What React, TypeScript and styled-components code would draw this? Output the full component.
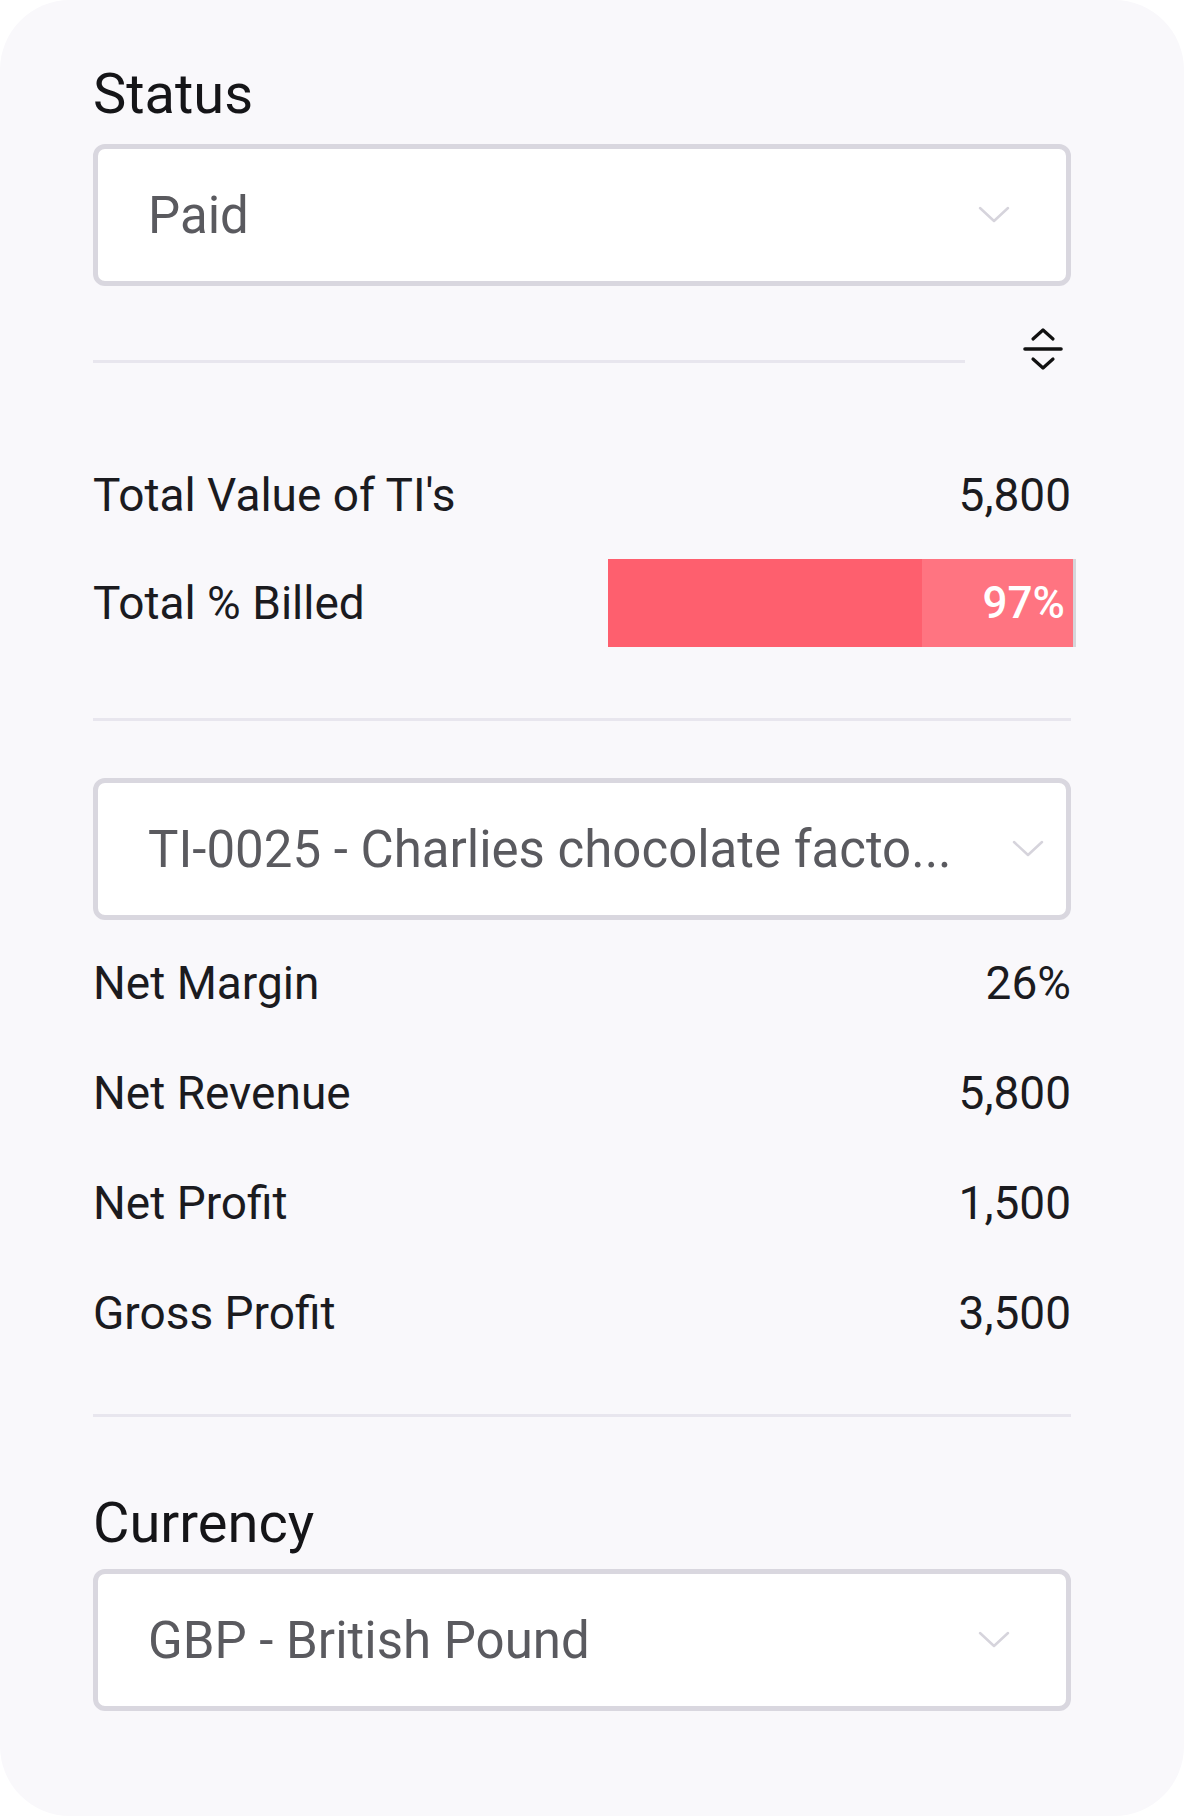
import React from "react";
import styled, { createGlobalStyle } from "styled-components";

const GlobalStyle = createGlobalStyle`
  html, body {
    margin: 0;
    padding: 0;
    background: #ffffff;
  }
  body {
    font-family: Roboto, "Liberation Sans", Arial, sans-serif;
    -webkit-font-smoothing: antialiased;
  }
`;

interface IStat {
  label: string;
  value: string;
}

const tiStats: IStat[] = [
  { label: "Net Margin", value: "26%" },
  { label: "Net Revenue", value: "5,800" },
  { label: "Net Profit", value: "1,500" },
  { label: "Gross Profit", value: "3,500" },
];

const Chevron: React.FC = () => (
  <svg width="32" height="18" viewBox="0 0 32 18" fill="none">
    <path d="M2 2 L16 15 L30 2" stroke="#d6d4dc" strokeWidth="2.5" strokeLinecap="round" strokeLinejoin="round" />
  </svg>
);

const ExpandIcon: React.FC = () => (
  <svg width="40" height="44" viewBox="0 0 40 44" fill="none">
    <path d="M10 12 L20 3 L30 12" stroke="#111" strokeWidth="3.2" strokeLinecap="round" strokeLinejoin="round" />
    <path d="M2 22 H38" stroke="#111" strokeWidth="3.6" strokeLinecap="round" />
    <path d="M10 32 L20 41 L30 32" stroke="#111" strokeWidth="3.2" strokeLinecap="round" strokeLinejoin="round" />
  </svg>
);

interface ISelectProps {
  value: string;
  chevronRight?: number;
}
const Select: React.FC<ISelectProps> = ({ value, chevronRight }) => (
  <SelectBox>
    <SelectValue>{value}</SelectValue>
    <ChevronWrap right={chevronRight}>
      <Chevron />
    </ChevronWrap>
  </SelectBox>
);

const App: React.FC = () => {
  return (
    <>
      <GlobalStyle />
      <Card>
        <FieldLabel>Status</FieldLabel>
        <Select value="Paid" chevronRight={56} />

        <ToolRow>
          <ToolDivider />
          <IconButton>
            <ExpandIcon />
          </IconButton>
        </ToolRow>

        <StatList>
          <StatRow>
            <StatLabel>Total Value of TI's</StatLabel>
            <StatValue>5,800</StatValue>
          </StatRow>
          <StatRow>
            <StatLabel>Total % Billed</StatLabel>
            <BilledBar>
              <BarFill style={{ width: "67.5%" }} />
              <BarRest>
                <BarText>97%</BarText>
              </BarRest>
            </BilledBar>
          </StatRow>
        </StatList>

        <Divider />

        <SelectGap>
          <Select value="TI-0025 - Charlies chocolate facto..." chevronRight={22} />
        </SelectGap>

        <TiStatList>
          {tiStats.map(s => (
            <StatRow key={s.label}>
              <StatLabel>{s.label}</StatLabel>
              <StatValue>{s.value}</StatValue>
            </StatRow>
          ))}
        </TiStatList>

        <Divider />

        <CurrencyLabel>Currency</CurrencyLabel>
        <Select value="GBP - British Pound" chevronRight={56} />
      </Card>
    </>
  );
};

const Card = styled.div`
  box-sizing: border-box;
  width: 1184px;
  height: 1816px;
  background: #f9f8fb;
  border-radius: 70px;
  padding: 62px 113px 0 93px;
  display: flex;
  flex-direction: column;
  color: #1b1b1f;
`;

const FieldLabel = styled.div`
  font-size: 56px;
  line-height: 64px;
  font-weight: 400;
  color: #151518;
  margin-bottom: 18px;
`;

const CurrencyLabel = styled(FieldLabel)`
  margin-top: 74px;
  margin-bottom: 14px;
`;

const SelectBox = styled.div`
  box-sizing: border-box;
  position: relative;
  height: 142px;
  border: 5px solid #d9d7df;
  border-radius: 12px;
  background: #ffffff;
  display: flex;
  align-items: center;
  padding: 0 110px 0 50px;
`;

const SelectValue = styled.div`
  font-size: 51px;
  color: #5a5a5f;
  white-space: nowrap;
  overflow: hidden;
`;

const ChevronWrap = styled.div<{ right?: number }>`
  position: absolute;
  top: 50%;
  right: ${p => p.right ?? 56}px;
  transform: translateY(-50%);
  display: flex;
`;

const ToolRow = styled.div`
  display: flex;
  align-items: center;
  margin-top: 41px;
  padding-right: 8px;
  gap: 58px;
  height: 44px;
`;

const Divider = styled.div`
  height: 3px;
  flex: none;
  background: #e8e6ee;
`;

const ToolDivider = styled(Divider)`
  flex: 1;
  margin-top: 24px;
`;

const IconButton = styled.div`
  width: 40px;
  height: 44px;
  display: flex;
  align-items: center;
  justify-content: center;
`;

const StatList = styled.div`
  display: flex;
  flex-direction: column;
  gap: 18px;
  margin-top: 79px;
  margin-bottom: 70px;
`;

const StatRow = styled.div`
  display: flex;
  align-items: center;
  justify-content: space-between;
  height: 90px;
`;

const StatLabel = styled.div`
  font-size: 46px;
  color: #1b1b1f;
`;

const StatValue = styled.div`
  font-size: 46px;
  color: #1b1b1f;
`;

const BilledBar = styled.div`
  width: 468px;
  height: 88px;
  margin-right: -5px;
  display: flex;
  background: #fe6472;
  border-right: 3px solid #d6d6da;
  box-sizing: border-box;
`;

const BarFill = styled.div`
  background: #fe5f6e;
`;

const BarRest = styled.div`
  flex: 1;
  background: #ff7481;
  display: flex;
  align-items: center;
  justify-content: flex-end;
  padding-right: 8px;
`;

const BarText = styled.div`
  font-size: 44px;
  font-weight: 500;
  color: #ffffff;
`;

const SelectGap = styled.div`
  margin-top: 57px;
`;

const TiStatList = styled.div`
  display: flex;
  flex-direction: column;
  gap: 20px;
  margin-top: 18px;
  margin-bottom: 56px;
`;

export default App;
